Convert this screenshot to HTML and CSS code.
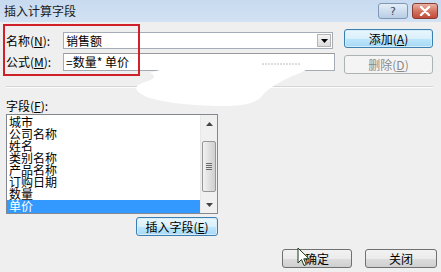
FILE: index.html
```html
<!DOCTYPE html>
<html>
<head>
<meta charset="utf-8">
<link rel="stylesheet" href="styles.css">
</head>
<body>
<div class="dialog">
  <div class="titlebar">
    <span class="title">插入计算字段</span>
    <div class="tb-buttons">
      <span class="tb-help">?</span>
      <span class="tb-close"><svg width="12" height="10" viewBox="0 0 12 10"><path d="M2 1 L10 9 M10 1 L2 9" stroke="#fff" stroke-width="2.4" stroke-linecap="round"/></svg></span>
    </div>
  </div>
  <div class="content">
    <div class="top">
      <div class="fields">
        <div class="row row-name">
          <label class="lbl">名称(<u>N</u>):</label>
          <div class="combo"><span class="combo-text">销售额</span><span class="combo-arrow"><svg width="7" height="4" viewBox="0 0 7 4"><path d="M0 0 H7 L3.5 4 Z" fill="#000"/></svg></span></div>
        </div>
        <div class="row row-formula">
          <label class="lbl">公式(<u>M</u>):</label>
          <div class="input">=数量* 单价</div>
        </div>
      </div>
      <div class="side-buttons">
        <button class="btn btn-default">添加(<u>A</u>)</button>
        <button class="btn btn-disabled">删除(<u>D</u>)</button>
      </div>
    </div>
    <div class="separator"></div>
    <div class="list-label">字段(<u>F</u>):</div>
    <div class="listbox">
      <ul class="items">
        <li>城市</li>
        <li>公司名称</li>
        <li>姓名</li>
        <li>类别名称</li>
        <li>产品名称</li>
        <li>订购日期</li>
        <li>数量</li>
        <li class="selected">单价</li>
      </ul>
      <div class="scrollbar">
        <div class="sb-arrow"><svg width="7" height="4" viewBox="0 0 7 4"><path d="M0 4 H7 L3.5 0 Z" fill="#444"/></svg></div>
        <div class="sb-track"><div class="sb-thumb"><span></span><span></span><span></span><span></span></div></div>
        <div class="sb-arrow"><svg width="7" height="4" viewBox="0 0 7 4"><path d="M0 0 H7 L3.5 4 Z" fill="#444"/></svg></div>
      </div>
    </div>
    <div class="insert-row">
      <button class="btn btn-default btn-insert">插入字段(<u>E</u>)</button>
    </div>
    <div class="bottom">
      <button class="btn btn-ok">确定</button>
      <button class="btn btn-close">关闭</button>
    </div>
  </div>
  <div class="redbox"></div>
  <svg class="scribble" width="441" height="272" viewBox="0 0 441 272">
    <path d="M150 73 C170 66 200 62 240 61 C270 60 295 58 310 62 C314 66 305 72 292 76 C280 82 268 88 262 96 C258 102 245 106 225 106 C200 106 170 104 150 98 C138 94 132 88 140 84 C150 80 160 78 150 73 Z" fill="#ffffff"/>
    <path d="M262 64 H300" stroke="#bcbcbc" stroke-width="1" stroke-dasharray="2 1"/>
  </svg>
  <svg class="cursor" width="14" height="20" viewBox="0 0 14 20">
    <path d="M1 1 L1 16 L4.5 12.5 L7 18.5 L9.2 17.6 L6.8 11.8 L12 11.8 Z" fill="#ffffff" stroke="#1a3a1a" stroke-width="1"/>
  </svg>
</div>
</body>
</html>
```

FILE: styles.css
```css
* { box-sizing: border-box; }
html, body { margin: 0; padding: 0; }
body {
  width: 441px;
  height: 272px;
  overflow: hidden;
  background: #f0f0f0;
  font-family: "Noto Sans CJK SC", "Liberation Sans", sans-serif;
  font-size: 12px;
  color: #000;
}
u { text-decoration: underline; }
.dialog {
  position: relative;
  width: 441px;
  height: 272px;
  background: #efefef;
}
.titlebar {
  height: 22px;
  display: flex;
  align-items: center;
  background: linear-gradient(#c7daef, #d2e2f3);
  padding-left: 4px;
}
.title {
  font-size: 12px;
  color: #1a1a1a;
  line-height: 22px;
}
.tb-buttons {
  margin-left: auto;
  display: flex;
  align-items: flex-start;
  gap: 4px;
  height: 22px;
  padding-top: 3px;
  padding-right: 3px;
}
.tb-help {
  width: 30px;
  height: 16px;
  border: 1px solid #8098b5;
  border-radius: 3px;
  background: linear-gradient(#e4eef8, #b8cde4);
  font-family: "DejaVu Sans", sans-serif;
  font-size: 11px;
  color: #3b4b63;
  display: flex;
  align-items: center;
  justify-content: center;
  line-height: 1;
}
.tb-close {
  width: 26px;
  height: 16px;
  border: 1px solid #843c33;
  border-radius: 3px;
  background: linear-gradient(#eab3a4, #d36d5a 55%, #c24a3a);
  display: flex;
  align-items: center;
  justify-content: center;
}
.content {
  padding: 0 4px 0 6px;
}
.top {
  display: flex;
  margin-top: 7px;
}
.fields {
  width: 329px;
  padding-top: 3px;
  display: flex;
  flex-direction: column;
  gap: 4px;
}
.row {
  display: flex;
  align-items: center;
}
.lbl {
  width: 57px;
  line-height: 14px;
}
.combo {
  width: 270px;
  height: 17px;
  border: 1px solid #a5acb5;
  background: #fff;
  display: flex;
  align-items: center;
}
.combo-text {
  flex: 1;
  padding-left: 2px;
  line-height: 14px;
}
.combo-arrow {
  width: 14px;
  height: 13px;
  margin-right: 1px;
  border: 1px solid #b5b5b5;
  background: linear-gradient(#f4f4f4, #dcdcdc);
  display: flex;
  align-items: center;
  justify-content: center;
}
.input {
  width: 272px;
  height: 18px;
  border: 1px solid #a5acb5;
  border-top-color: #999;
  background: #fff;
  padding-left: 2px;
  line-height: 16px;
}
.side-buttons {
  margin-left: 9px;
  display: flex;
  flex-direction: column;
  gap: 7px;
}
.btn {
  font-family: "Noto Sans CJK SC", "Liberation Sans", sans-serif;
  font-size: 12px;
  line-height: 14px;
  padding: 0;
  color: #000;
  border: 1px solid #707070;
  border-radius: 3px;
  background: linear-gradient(#f2f2f2 0%, #ebebeb 50%, #dddddd 51%, #cfcfcf 100%);
  display: flex;
  align-items: center;
  justify-content: center;
}
.side-buttons .btn {
  width: 89px;
  height: 19px;
}
.btn-default {
  border-color: #3c7fb1;
  background: linear-gradient(#eaf6fd 0%, #d9f0fc 50%, #bee6fd 51%, #a7d9f5 100%);
  box-shadow: inset 0 0 0 1px #d6ecf8;
}
.btn-disabled {
  border-color: #adb2b5;
  background: #f4f4f4;
  color: #8a8a8a;
}
.separator {
  margin-top: 12px;
  height: 1px;
  width: 427px;
  background: #d5d5d5;
  border-bottom: 1px solid #fbfbfb;
  box-sizing: content-box;
}
.list-label {
  margin-top: 11px;
  line-height: 14px;
  height: 14px;
}
.listbox {
  margin-top: 1px;
  width: 212px;
  height: 100px;
  border: 1px solid #828790;
  background: #fff;
  display: flex;
}
.items {
  list-style: none;
  margin: 0;
  padding: 1px 0 0 0;
  flex: 1;
}
.items li {
  height: 12px;
  line-height: 12px;
  font-size: 12px;
  padding-left: 2px;
  white-space: nowrap;
}
.items li.selected {
  height: 13px;
  background: #3399ff;
  color: #fff;
}
.scrollbar {
  width: 17px;
  display: flex;
  flex-direction: column;
  background: #f0f0f0;
  border-left: 1px solid #e8e8e8;
}
.sb-arrow {
  height: 17px;
  display: flex;
  align-items: center;
  justify-content: center;
}
.sb-track {
  flex: 1;
  padding: 9px 1px 3px 1px;
}
.sb-thumb {
  height: 51px;
  border: 1px solid #979797;
  border-radius: 2px;
  background: linear-gradient(90deg, #f2f2f2, #e0e0e0 50%, #cfcfcf);
  display: flex;
  flex-direction: column;
  align-items: center;
  justify-content: center;
  gap: 1px;
}
.sb-thumb span {
  width: 6px;
  height: 1px;
  background: #6a6a6a;
}
.insert-row {
  width: 212px;
  display: flex;
  justify-content: flex-end;
  margin-top: 3px;
}
.btn-insert {
  width: 82px;
  height: 19px;
}
.bottom {
  margin-top: 13px;
  display: flex;
  justify-content: flex-end;
  gap: 13px;
}
.btn-ok {
  width: 70px;
  height: 19px;
}
.btn-close {
  width: 72px;
  height: 19px;
}
.redbox {
  position: absolute;
  left: 3px;
  top: 24px;
  width: 137px;
  height: 52px;
  border: 2px solid #d0212b;
}
.scribble {
  position: absolute;
  left: 0;
  top: 0;
  pointer-events: none;
}
.cursor {
  position: absolute;
  left: 297px;
  top: 247px;
}
```
